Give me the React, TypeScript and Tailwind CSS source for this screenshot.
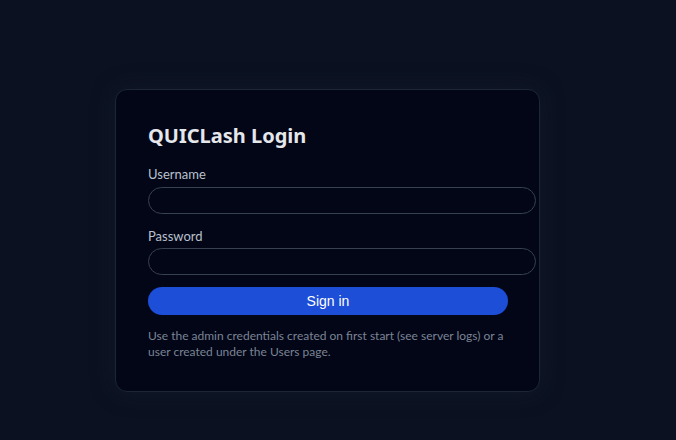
import { useState } from 'react';

/**
 * QUICLash admin login card
 */
export default function App() {
  const [username, setUsername] = useState('');
  const [password, setPassword] = useState('');

  return (
    <div className="min-h-[440px] w-full bg-[#0b1120] pl-[115px] pt-[89px] font-['Noto_Sans','Open_Sans',sans-serif]">
      <div className="w-[425px] rounded-xl border border-[#1e2535] bg-[#020617] px-8 pt-8 pb-[31px] shadow-[0_0_24px_rgba(30,41,59,0.35)]">
        <h1 className="mb-[14px] text-[20px] leading-[28px] font-bold text-[#e5e7eb]">QUICLash Login</h1>

        <form className="flex flex-col font-['Lato',sans-serif]" onSubmit={(e) => e.preventDefault()}>
          <label className="mb-[3px] text-[13px] leading-[20px] text-[#b9c1cd]">Username</label>
          <input
            value={username}
            onChange={(e) => setUsername(e.target.value)}
            className="h-[27px] w-[388px] rounded-full border border-[#374151] bg-[#020617] px-3 text-sm text-[#e5e7eb] outline-none"
          />

          <label className="mt-[12px] mb-[2px] text-[13px] leading-[20px] text-[#b9c1cd]">Password</label>
          <input
            type="password"
            value={password}
            onChange={(e) => setPassword(e.target.value)}
            className="h-[27px] w-[388px] rounded-full border border-[#374151] bg-[#020617] px-3 text-sm text-[#e5e7eb] outline-none"
          />

          <button
            type="submit"
            className="mt-3 h-[28px] w-[360px] rounded-full bg-[#1d4ed8] font-['Liberation_Sans',Arial,sans-serif] text-[14px] text-white"
          >
            Sign in
          </button>

          <p className="mt-[13px] text-[12px] leading-[16px] text-[#7b8494]">
            Use the admin credentials created on first start (see server logs) or a user created under the Users page.
          </p>
        </form>
      </div>
    </div>
  );
}
